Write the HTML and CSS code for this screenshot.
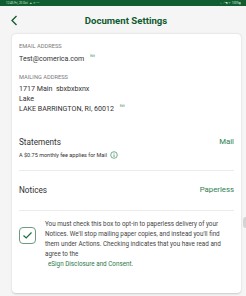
FILE: index.html
```html
<!DOCTYPE html>
<html>
<head>
<meta charset="utf-8">
<link rel="stylesheet" href="styles.css">
</head>
<body>
<div class="status">
  <span>12:45 Fri, 20 Oct &nbsp;▲ ✕ • •</span>
  <span>⌁ ⁄ ◥ ᯤ 100%▮</span>
</div>
<div class="header">
  <svg class="back" width="8" height="11" viewBox="0 0 8 11"><path d="M6.5 1 L2 5.5 L6.5 10" fill="none" stroke="#0f5a2e" stroke-width="1.3"/></svg>
  <div class="title">Document Settings</div>
</div>
<div class="card">
  <div class="label">EMAIL ADDRESS</div>
  <div class="value">Test@comerica.com<span class="edit">Edit</span></div>
  <div class="label">MAILING ADDRESS</div>
  <div class="address">
    <div class="line">1717 Main&nbsp; sbxbxbxnx</div>
    <div class="line">Lake</div>
    <div class="line">LAKE BARRINGTON, RI, 60012<span class="edit">Edit</span></div>
  </div>
  <div class="row statements"><span>Statements</span><span class="opt">Mail</span></div>
  <div class="fee"><span>A $0.75 monthly fee applies for Mail</span><svg class="info" width="8" height="8" viewBox="0 0 8 8"><circle cx="4" cy="4" r="3.3" fill="none" stroke="#3a8a5a" stroke-width="0.7"/><path d="M4 3.5 V6" stroke="#3a8a5a" stroke-width="0.8"/><circle cx="4" cy="2.3" r="0.45" fill="#3a8a5a"/></svg></div>
  <div class="divider d1"></div>
  <div class="row notices"><span>Notices</span><span class="opt">Paperless</span></div>
  <div class="divider d2"></div>
  <div class="consent">
    <div class="checkbox">
      <svg width="11" height="9" viewBox="0 0 11 9"><path d="M1.5 4.5 L4.2 7 L9.5 1.5" fill="none" stroke="#1a6e3a" stroke-width="1.2"/></svg>
    </div>
    <div class="ctext">
      <p>You must check this box to opt-in to paperless delivery of your Notices. We'll stop mailing paper copies, and instead you'll find them under Actions. Checking indicates that you have read and agree to the</p>
      <div class="link">eSign Disclosure and Consent.</div>
    </div>
  </div>
</div>
<div class="handle"></div>
</body>
</html>
```
FILE: styles.css
```css
* { box-sizing: border-box; }
html, body { margin: 0; padding: 0; }
body {
  width: 246px;
  height: 296px;
  overflow: hidden;
  background: #f5f5f5;
  font-family: Roboto, "Liberation Sans", sans-serif;
  color: #333;
  position: relative;
}
.status {
  height: 6px;
  background: #0f5d30;
  color: #cfe3d6;
  font-size: 3px;
  line-height: 6px;
  display: flex;
  justify-content: space-between;
  padding: 0 5px 0 6px;
}
.header {
  height: 28px;
  display: flex;
  align-items: center;
  position: relative;
  padding-left: 10px;
}
.back { display: block; }
.title {
  position: absolute;
  left: 0; right: 0;
  top: 9px;
  text-align: center;
  font-size: 9.6px;
  font-weight: 700;
  color: #0f5a2e;
  line-height: 12px;
  padding-left: 6px;
}
.card {
  margin: 0 5px 0 12px;
  background: #fff;
  border-radius: 4px;
  box-shadow: 0 0.5px 2px rgba(0,0,0,0.18);
  padding: 7px 7px 24px 7px;
}
.label {
  font-size: 5.7px;
  line-height: 10px;
  height: 10px;
  color: #7a7a7a;
}
.value {
  margin-top: 3px;
  margin-bottom: 8px;
  font-size: 7.1px;
  line-height: 10px;
  height: 10px;
  color: #333;
}
.edit {
  font-size: 2.8px;
  line-height: 4px;
  color: #3a8a5a;
  vertical-align: top;
  margin-left: 6px;
}
.address {
  margin-top: 2px;
  font-size: 7.1px;
  color: #333;
}
.line { height: 10px; line-height: 10px; }
.row {
  display: flex;
  justify-content: space-between;
  align-items: center;
  height: 12px;
  font-size: 8.2px;
  line-height: 12px;
  color: #333;
}
.opt { color: #2f7d50; font-size: 7.8px; }
.statements { margin-top: 22px; }
.fee {
  margin-top: 3px;
  height: 8px;
  font-size: 5.5px;
  line-height: 8px;
  color: #333;
  display: flex;
  align-items: center;
  gap: 3px;
}
.info { display: block; }
.divider { height: 1px; background: #ececec; }
.d1 { margin-top: 11px; }
.notices { margin-top: 13px; }
.d2 { margin-top: 14px; }
.consent {
  margin-top: 8px;
  display: flex;
  gap: 9px;
}
.checkbox {
  margin-top: 8px;
  width: 17px;
  height: 17px;
  flex: none;
  border: 1px solid #6e9a80;
  border-radius: 4px;
  display: flex;
  align-items: center;
  justify-content: center;
}
.checkbox svg { display: block; }
.ctext { width: 180px; }
.ctext p {
  margin: 0;
  font-size: 6.3px;
  line-height: 10px;
  color: #444;
}
.link {
  padding-left: 3px;
  font-size: 6.3px;
  line-height: 10px;
  color: #2a7a4a;
}
.handle {
  position: absolute;
  right: -3px;
  top: 217px;
  width: 6px;
  height: 11px;
  border-radius: 3px;
  background: #d4d4d4;
}
```
